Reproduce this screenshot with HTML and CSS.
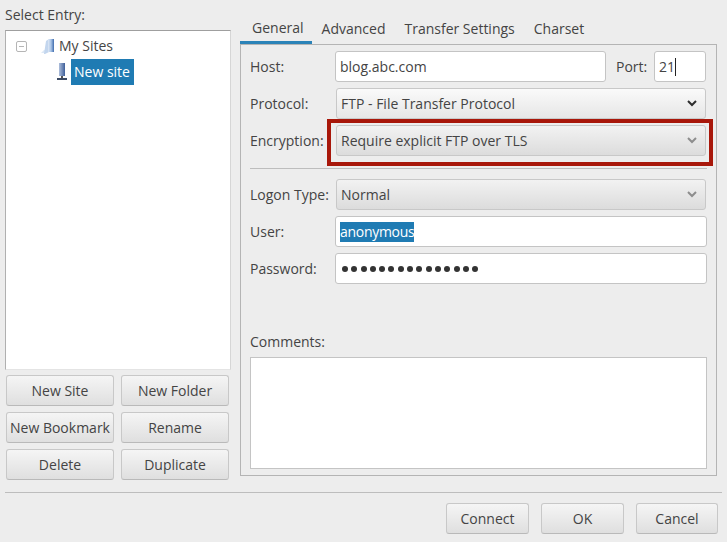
FILE: index.html
```html
<!DOCTYPE html>
<html lang="en">
<head>
    <meta charset="UTF-8">
    <meta name="viewport" content="width=device-width, initial-scale=1.0">
    <title>Site Manager</title>
    <link rel="stylesheet" href="styles.css">
</head>
<body>
    <div class="dialog">
        <div class="main">
            <div class="sites">
                <div class="sites-label">Select Entry:</div>
                <div class="tree">
                    <div class="tree-row">
                        <span class="expander"></span>
                        <svg class="tree-icon" width="14" height="16" viewBox="0 0 14 16">
                            <defs>
                                <linearGradient id="folder" x1="0" y1="0" x2="1" y2="0">
                                    <stop offset="0" stop-color="#dfe9f6"/>
                                    <stop offset="0.5" stop-color="#a9c4e6"/>
                                    <stop offset="1" stop-color="#3f6cae"/>
                                </linearGradient>
                            </defs>
                            <path d="M0 15 L3 12 L5 12 L5 15 Z" fill="#dce8f6"/>
                            <path d="M5 3 L8 1 L8 14 L4 16 L3 16 Z" fill="#c3d6ee"/>
                            <path d="M7 1 L13 1 L13 14 L7 14 Z" fill="url(#folder)"/>
                        </svg>
                        <span class="tree-text">My Sites</span>
                    </div>
                    <div class="tree-row tree-child">
                        <svg class="tree-icon" width="10" height="18" viewBox="0 0 10 18">
                            <defs>
                                <linearGradient id="server" x1="0" y1="0" x2="1" y2="0">
                                    <stop offset="0" stop-color="#aebfdc"/>
                                    <stop offset="1" stop-color="#3f5f99"/>
                                </linearGradient>
                            </defs>
                            <rect x="2" y="0" width="6" height="13" fill="url(#server)"/>
                            <rect x="4" y="13" width="2" height="3" fill="#555"/>
                            <rect x="0" y="15" width="10" height="2" fill="#3c4a63"/>
                        </svg>
                        <span class="tree-text selected">New site</span>
                    </div>
                </div>
                <div class="site-buttons">
                    <button class="btn">New Site</button>
                    <button class="btn">New Folder</button>
                    <button class="btn">New Bookmark</button>
                    <button class="btn">Rename</button>
                    <button class="btn">Delete</button>
                    <button class="btn">Duplicate</button>
                </div>
            </div>

            <div class="notebook">
                <div class="tabs">
                    <span class="tab active">General</span>
                    <span class="tab">Advanced</span>
                    <span class="tab">Transfer Settings</span>
                    <span class="tab">Charset</span>
                </div>
                <div class="panel">
                    <div class="row">
                        <label class="field-label">Host:</label>
                        <div class="input host">blog.abc.com</div>
                        <label class="port-label">Port:</label>
                        <div class="input port"><span class="caret">21</span></div>
                    </div>
                    <div class="row">
                        <label class="field-label">Protocol:</label>
                        <div class="combo plain">
                            <span>FTP - File Transfer Protocol</span>
                            <svg width="10" height="7" viewBox="0 0 10 7"><path d="M1 1 L5 5 L9 1" fill="none" stroke="#2e2e2e" stroke-width="2"/></svg>
                        </div>
                    </div>
                    <div class="row">
                        <label class="field-label">Encryption:</label>
                        <div class="combo">
                            <span>Require explicit FTP over TLS</span>
                            <svg width="10" height="7" viewBox="0 0 10 7"><path d="M1 1 L5 5 L9 1" fill="none" stroke="#8d8d8d" stroke-width="2"/></svg>
                            <div class="highlight"></div>
                        </div>
                    </div>
                    <div class="separator"></div>
                    <div class="row">
                        <label class="field-label">Logon Type:</label>
                        <div class="combo">
                            <span>Normal</span>
                            <svg width="10" height="7" viewBox="0 0 10 7"><path d="M1 1 L5 5 L9 1" fill="none" stroke="#8d8d8d" stroke-width="2"/></svg>
                        </div>
                    </div>
                    <div class="row">
                        <label class="field-label">User:</label>
                        <div class="input wide"><span class="text-selected">anonymous</span></div>
                    </div>
                    <div class="row">
                        <label class="field-label">Password:</label>
                        <div class="input wide dots">
                            <i></i><i></i><i></i><i></i><i></i><i></i><i></i><i></i><i></i><i></i><i></i><i></i><i></i><i></i><i></i>
                        </div>
                    </div>
                    <div class="comments-label">Comments:</div>
                    <div class="comments"></div>
                </div>
            </div>
        </div>

        <div class="footer">
            <button class="btn">Connect</button>
            <button class="btn">OK</button>
            <button class="btn">Cancel</button>
        </div>
    </div>
</body>
</html>
```

FILE: styles.css
```css
body {
    margin: 0;
    background: #ededed;
    color: #444;
    font-family: 'Open Sans', sans-serif;
    font-size: 14px;
    overflow: hidden;
}

.dialog {
    height: 542px;
    padding: 0 5px;
    box-sizing: border-box;
}

.main {
    display: flex;
    gap: 9px;
    height: 476px;
}

/* Left column */
.sites {
    width: 226px;
    flex: none;
}

.sites-label {
    height: 30px;
    line-height: 30px;
}

.tree {
    height: 340px;
    box-sizing: border-box;
    background: white;
    border: 1px solid #b0b0b0;
    border-top-color: #9f9f9f;
    border-right-color: #d6d6d6;
    border-bottom-color: #e4e4e4;
    padding: 2px 0 0 10px;
}

.tree-row {
    display: flex;
    align-items: center;
    height: 26px;
}

.tree-child {
    padding-left: 41px;
}

.expander {
    width: 9px;
    height: 9px;
    border: 1px solid #b5b5b5;
    border-radius: 2px;
    margin-right: 14px;
    background: linear-gradient(#b5b5b5, #b5b5b5) center / 5px 1px no-repeat;
}

.tree-icon {
    flex: none;
}

.tree-text {
    padding: 0 4px;
    line-height: 26px;
}

.selected {
    margin-left: 4px;
    padding-left: 3px;
    background: #1f7bb3;
    color: white;
}

.site-buttons {
    display: grid;
    grid-template-columns: 108px 108px;
    grid-auto-rows: 31px;
    gap: 6px 7px;
    margin: 5px 0 0 1px;
}

.btn {
    padding: 0;
    font: inherit;
    color: inherit;
    border: 1px solid #c8c8c8;
    border-bottom-color: #b9b9b9;
    border-radius: 3px;
    background: linear-gradient(#f5f5f5, #dfdfdf);
    white-space: nowrap;
}

/* Right column */
.notebook {
    width: 477px;
    flex: none;
    display: flex;
    flex-direction: column;
}

.tabs {
    display: flex;
    height: 44px;
    flex: none;
    align-items: flex-end;
}

.tab {
    padding: 0 9px 0 10px;
    height: 27px;
    line-height: 23px;
    box-sizing: border-box;
}

.tab.active {
    padding: 0 8px 0 12px;
    border-bottom: 3px solid #2b83b8;
    line-height: 22px;
}

.panel {
    flex: 1;
    box-sizing: border-box;
    border: 1px solid #b4b4b4;
    padding: 6px 9px;
    display: flex;
    flex-direction: column;
}

.row {
    display: flex;
    align-items: center;
    height: 31px;
    margin-bottom: 6px;
}

.field-label {
    width: 85px;
    flex: none;
}

.port-label {
    width: 38px;
    flex: none;
    margin-left: 10px;
}

.input {
    box-sizing: border-box;
    height: 31px;
    line-height: 29px;
    background: white;
    border: 1px solid #c4c4c4;
    border-radius: 3px;
    padding: 0 4px;
}

.host {
    width: 271px;
}

.port {
    width: 52px;
}

.wide {
    width: 372px;
}

.caret {
    border-right: 1px solid #222;
    display: inline-block;
    line-height: 18px;
}

.text-selected {
    background: #1f7bb3;
    color: white;
    display: inline-block;
    line-height: 20px;
    letter-spacing: -0.3px;
}

.dots {
    display: flex;
    align-items: center;
    gap: 3.3px;
    padding-left: 6px;
}

.dots i {
    width: 6px;
    height: 6px;
    border-radius: 50%;
    background: #333;
}

.combo {
    position: relative;
    box-sizing: border-box;
    width: 370px;
    height: 31px;
    margin-left: 1px;
    padding: 0 8px 0 4px;
    display: flex;
    align-items: center;
    justify-content: space-between;
    border: 1px solid #c8c8c8;
    border-radius: 3px;
    background: linear-gradient(#f2f2f2, #dcdcdc);
}

.combo.plain {
    background: linear-gradient(#fafafa, #e6e6e6);
}

.highlight {
    position: absolute;
    left: -10px;
    right: -8px;
    top: -7px;
    bottom: -11px;
    border: 4px solid #a8170a;
}

.separator {
    height: 1px;
    background: #bdbdbd;
    margin: 6px 0 10px;
    width: 457px;
}

.comments-label {
    margin-top: 36px;
    height: 31px;
    line-height: 31px;
}

.comments {
    box-sizing: border-box;
    width: 457px;
    height: 112px;
    background: white;
    border: 1px solid #c4c4c4;
}

/* Bottom bar */
.footer {
    border-top: 1px solid #bdbdbd;
    margin-top: 16px;
    padding: 10px 4px 0 0;
    display: flex;
    justify-content: flex-end;
    gap: 12px;
}

.footer .btn {
    width: 83px;
    height: 31px;
}

.footer .btn:last-child {
    width: 82px;
}
```
